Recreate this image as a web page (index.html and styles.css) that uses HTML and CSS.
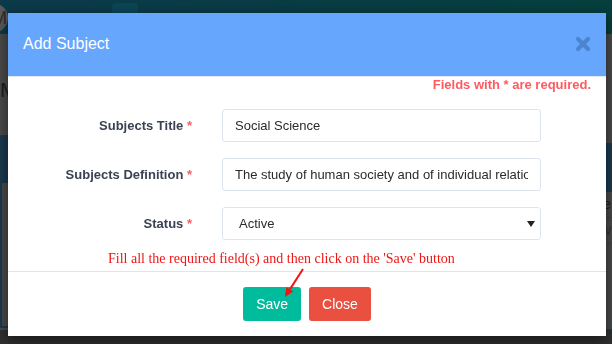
FILE: index.html
```html
<!DOCTYPE html>
<html lang="en">
<head>
    <meta charset="UTF-8">
    <meta name="viewport" content="width=device-width, initial-scale=1.0">
    <title>Subjects - Add Subject</title>
    <link rel="stylesheet" href="styles.css">
</head>
<body>
    <!-- Page behind the modal (dimmed) -->
    <div class="page">
        <div class="navbar">
            <div class="avatar">M</div>
            <div class="nav-pill"></div>
        </div>
        <h1 class="page-title">Manage Subjects</h1>
        <div class="page-cols">
            <div class="panel panel-left">
                <div class="panel-head"></div>
                <div class="panel-body"></div>
            </div>
            <div class="panel panel-right">
                <div class="panel-head"></div>
                <div class="table-row">Name</div>
                <div class="table-row">New</div>
                <div class="table-row tall"></div>
            </div>
        </div>
        <div class="page-foot"></div>
    </div>

    <!-- Add Subject Modal -->
    <div class="modal">
        <div class="modal-header">
            <h4 class="modal-title">Add Subject</h4>
            <button class="close-btn" title="Close">
                <svg width="16" height="16" viewBox="0 0 16 16">
                    <path d="M3 3 L13 13 M13 3 L3 13" stroke="#4c84d0" stroke-width="4.2" stroke-linecap="round"/>
                </svg>
            </button>
        </div>
        <div class="modal-body">
            <p class="required-note">Fields with * are required.</p>
            <div class="form-row">
                <label for="subjectTitle">Subjects Title <span class="star">*</span></label>
                <input type="text" id="subjectTitle" value="Social Science">
            </div>
            <div class="form-row">
                <label for="subjectDef">Subjects Definition <span class="star">*</span></label>
                <input type="text" id="subjectDef" value="The study of human society and of individual relationships in and to society.">
            </div>
            <div class="form-row">
                <label for="subjectStatus">Status <span class="star">*</span></label>
                <select id="subjectStatus">
                    <option>Active</option>
                    <option>Inactive</option>
                </select>
            </div>
            <p class="help-text">Fill all the required field(s) and then click on the 'Save' button</p>
        </div>
        <div class="modal-footer">
            <button class="btn btn-save">Save</button>
            <button class="btn btn-close">Close</button>
        </div>
        <!-- hint arrow pointing at Save -->
        <svg class="hint-arrow" width="26" height="34" viewBox="0 0 26 34">
            <line x1="20" y1="3" x2="6.9" y2="23.4" stroke="#f01515" stroke-width="2"/>
            <polygon points="2,31 10.4,25.6 3.3,21.1" fill="#f01515"/>
        </svg>
    </div>
</body>
</html>
```

FILE: styles.css
```css
/* Page behind the modal, drawn already dimmed */
* {
    box-sizing: border-box;
}
body {
    margin: 0;
    height: 100vh;
    overflow: hidden;
    background-color: #4b4b4b;
    font-family: "Liberation Sans", Arial, sans-serif;
}
.navbar {
    height: 34px;
    position: relative;
    background: linear-gradient(to right, #0c3a4c, #05403e);
}
.avatar {
    position: absolute;
    left: -22px;
    top: 3px;
    width: 30px;
    height: 30px;
    border-radius: 50%;
    background-color: #5a5a5a;
    color: #2c2c2c;
    font-size: 18px;
    line-height: 30px;
    text-align: right;
    padding-right: 1px;
}
.nav-pill {
    position: absolute;
    left: 112px;
    top: 3px;
    width: 26px;
    height: 12px;
    border-radius: 4px;
    background-color: #0b4656;
}
.page-title {
    margin: 0;
    height: 101px;
    padding-top: 44px;
    font-size: 21px;
    font-weight: normal;
    line-height: 24px;
    color: #1e1e1e;
    white-space: nowrap;
}
.page-cols {
    display: flex;
    justify-content: space-between;
    height: 195px;
}
.panel {
    width: 300px;
}
.panel-head {
    background-color: #1c3a50;
}
.panel-left .panel-head {
    height: 48px;
}
.panel-left .panel-body {
    height: 145px;
    border: 2px solid #1c3a50;
    border-top: none;
}
.panel-right {
    margin-top: 8px;
}
.panel-right .panel-head {
    height: 49px;
}
.table-row {
    height: 26px;
    border-bottom: 1px solid #3e4348;
    padding-right: 1px;
    text-align: right;
    font-size: 15px;
    line-height: 24px;
    color: #222;
}
.table-row + .table-row {
    color: #333;
}
.table-row.tall {
    height: 87px;
    border-bottom: 2px solid #1c3a50;
}
.page-foot {
    height: 20px;
    background-color: #303030;
}

/* Modal */
.modal {
    position: fixed;
    top: 13px;
    left: 8px;
    width: 598px;
    background-color: white;
    box-shadow: 0 4px 14px rgba(0, 0, 0, 0.55);
}
.modal-header {
    height: 64px;
    padding: 0 15px 1px 15px;
    background-color: #66a6fd;
    border-bottom: 1px solid #dfe8f3;
    display: flex;
    align-items: center;
    justify-content: space-between;
}
.modal-title {
    margin: 0;
    font-size: 16px;
    font-weight: normal;
    color: white;
}
.close-btn {
    border: none;
    background: none;
    padding: 0;
    width: 16px;
    height: 16px;
    cursor: pointer;
}
.modal-body {
    padding: 0 15px;
}
.required-note {
    margin: 0 0 17px 0;
    text-align: right;
    font-size: 13px;
    font-weight: bold;
    line-height: 15px;
    color: #ff5a5f;
}
.form-row {
    display: grid;
    grid-template-columns: 169px 319px;
    column-gap: 30px;
    align-items: center;
    margin-bottom: 16px;
}
.form-row label {
    text-align: right;
    font-size: 13px;
    font-weight: bold;
    color: #3b4252;
}
.star {
    color: #ff5a5f;
}
.form-row input,
.form-row select {
    height: 33px;
    width: 100%;
    padding: 0 12px;
    border: 1px solid #dde4ee;
    border-radius: 3px;
    background-color: white;
    font-family: "Liberation Sans", Arial, sans-serif;
    font-size: 13px;
    color: #2b2b2b;
}
.form-row select {
    appearance: none;
    padding-left: 16px;
    background-image: url("data:image/svg+xml,%3Csvg xmlns='http://www.w3.org/2000/svg' width='8' height='6'%3E%3Cpath d='M0 0h8L4 6z' fill='%23222'/%3E%3C/svg%3E");
    background-repeat: no-repeat;
    background-position: right 5px center;
}
.help-text {
    margin: -6px 0 0 85px;
    height: 21px;
    font-family: "Liberation Serif", "Times New Roman", serif;
    font-size: 14px;
    line-height: 18px;
    color: #f01515;
}
.modal-footer {
    border-top: 1px solid #dfe5ee;
    padding: 15px;
    display: flex;
    justify-content: center;
    gap: 8px;
}
.btn {
    height: 34px;
    padding: 0 13px;
    border: none;
    border-radius: 3px;
    font-family: "Liberation Sans", Arial, sans-serif;
    font-size: 14px;
    color: white;
    cursor: pointer;
}
.btn-save {
    background-color: #00bb9c;
}
.btn-close {
    background-color: #e9503f;
}
.hint-arrow {
    position: absolute;
    left: 275px;
    top: 253px;
}
```
